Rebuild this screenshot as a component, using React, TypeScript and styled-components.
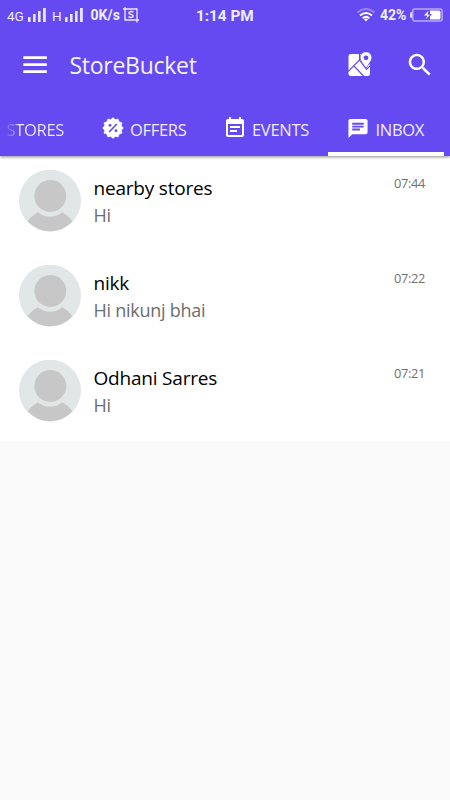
import React from "react";
import styled, { createGlobalStyle } from "styled-components";

const Global = createGlobalStyle`
  * { box-sizing: border-box; }
  body { margin: 0; background: #fafafa; font-family: "Open Sans", "Noto Sans", sans-serif; }
  svg { display: block; flex: none; }
`;

const Screen = styled.div`
  width: 450px;
  height: 800px;
  overflow: hidden;
  background: #fafafa;
`;

const Header = styled.header`
  position: relative;
  height: 156px;
  background: #644af0;
  color: #fff;
  box-shadow: 0 1px 3px rgba(0, 0, 0, 0.45);
`;

const StatusBar = styled.div`
  display: grid;
  grid-template-columns: 196px 1fr auto;
  height: 32px;
  padding-right: 7px;
  font-family: Roboto, sans-serif;
  color: #f0edff;
`;

const StatusGroup = styled.div`
  display: flex;
  align-items: center;
  height: 30px;
`;

const StatusText = styled.span<{ $size: number; $weight?: number; $left?: number; $width?: number; $drop?: number }>`
  font-size: ${(p) => p.$size}px;
  font-weight: ${(p) => p.$weight ?? 400};
  margin-left: ${(p) => p.$left ?? 0}px;
  width: ${(p) => (p.$width ? `${p.$width}px` : "auto")};
  padding-top: ${(p) => p.$drop ?? 0}px;
  line-height: 32px;
  height: 32px;
  white-space: nowrap;
`;

const AppBar = styled.div`
  display: flex;
  align-items: center;
  height: 66px;
  padding: 0 15px 0 19px;
`;

const Title = styled.h1`
  margin: 0 auto 0 18.5px;
  font-size: 23px;
  font-weight: 400;
  line-height: 66px;
  letter-spacing: -0.28px;
  color: #f4f1ff;
`;

const MapButton = styled.div`
  margin-right: 32px;
`;

const Tabs = styled.nav`
  display: grid;
  grid-template-columns: 82px 124px 122px 116px;
  height: 58px;
`;

const Tab = styled.div<{ $active?: boolean; $pad: number }>`
  display: flex;
  align-items: center;
  height: 58px;
  padding: 2px 0 0 ${(p) => p.$pad}px;
  box-shadow: ${(p) => (p.$active ? "inset 0 -4px #fff" : "none")};
`;

const TabLabel = styled.span<{ $left?: number; $fade?: boolean }>`
  margin-left: ${(p) => p.$left ?? 0}px;
  padding-top: 4px;
  font-size: 16.5px;
  letter-spacing: -0.3px;
  line-height: 24px;
  white-space: nowrap;
  color: ${(p) => (p.$fade ? "transparent" : "#efecff")};
  background: ${(p) => (p.$fade ? "linear-gradient(90deg, #7c66f3 0, #a99bf8 8px, #efecff 12px)" : "none")};
  background-clip: ${(p) => (p.$fade ? "text" : "border-box")};
`;

const List = styled.main`
  background: #fff;
`;

const Row = styled.article`
  display: flex;
  height: 95px;
  padding: 13.5px 25px 0 19px;
`;

const Message = styled.div`
  flex: 1;
  margin-left: 12.5px;
`;

const Name = styled.div`
  height: 27px;
  padding-top: 4.5px;
  font-size: 19px;
  letter-spacing: -0.2px;
  line-height: 28px;
  color: #000;
`;

const Preview = styled.div`
  padding-top: 4.5px;
  font-size: 18px;
  letter-spacing: -0.26px;
  line-height: 28px;
  color: #6d6d6d;
`;

const Time = styled.time`
  padding-top: 3.5px;
  font-size: 12.8px;
  letter-spacing: -0.35px;
  line-height: 20px;
  color: #707070;
`;

const Signal = () => (
  <svg width="18" height="14" viewBox="0 0 18 14" fill="#e9e5ff">
    <rect x="0" y="9" width="2.6" height="5" />
    <rect x="5" y="6" width="2.6" height="8" />
    <rect x="10" y="3" width="2.6" height="11" />
    <rect x="15" y="0" width="2.8" height="14" />
  </svg>
);

const Screenshot = () => (
  <svg width="16" height="16" viewBox="0 0 16 16" fill="none" stroke="#eeeaff" strokeWidth="1.3">
    <path d="M0 2H14V15.500M2 0V13H16" />
    <path d="M10.300 5.300C9.500 4.300 5.900 4.200 5.900 6c0 1.700 4.300 1.100 4.300 3 0 1.900-3.700 1.700-4.600.500" strokeWidth="1.5" />
  </svg>
);

const Wifi = () => (
  <svg width="20" height="14" viewBox="0 0 20 14" fill="none" strokeWidth="2">
    <path d="M1.500 4.500Q10-2.500 18.500 4.500" stroke="#9583f5" />
    <path d="M4 7.500Q10 2.500 16 7.500M6.700 10.300Q10 7.500 13.300 10.300" stroke="#fff" />
    <path d="M8 11.300Q10 9.800 12 11.300L10 13.500Z" fill="#fff" />
  </svg>
);

const Battery = () => (
  <svg width="33" height="14" viewBox="0 0 33 14">
    <path d="M1.500 4.300Q.500 4.300.500 5.500V8.500Q.500 9.700 1.500 9.700Z" fill="#fff" stroke="#fff" strokeWidth=".6" />
    <rect x="2.800" y=".900" width="29.300" height="12.200" rx="2" fill="none" stroke="#b6aaf8" strokeWidth="1.500" />
    <path d="M20 2.500H29Q30.500 2.500 30.500 4V10Q30.500 11.500 29 11.500H20Z" fill="#fff" />
    <path d="M18.500 2.500 14 7.500h3.500L15.500 11.500 20 6.800h-2.500Z" fill="#fff" />
    <path d="M20 5.500v3l2-2.500h-2Z" fill="#644af0" />
  </svg>
);

const Menu = () => (
  <svg width="32" height="31" viewBox="0 0 32 31" fill="#fff">
    <path d="M4.300 6.300h23.500v2.700H4.300zM4.300 13.200h23.500v2.700H4.300zM4.300 20.200h23.500v2.700H4.300z" />
  </svg>
);

const MapPin = () => (
  <svg width="25" height="26" viewBox="0 0 25 26">
    <path d="M3 2H14L22 13V21.500Q22 24 19.500 24H3Q.500 24 .500 21.500V4.500Q.500 2 3 2Z" fill="#fff" />
    <path d="M0 19.500 11.500 8M5.500 13.500 16 24.500M11.500 1V8L18.500 17.500L23 13" fill="none" stroke="#644af0" strokeWidth="1.100" />
    <path d="M18 -.300a5.900 5.900 0 0 1 5.900 5.900c0 3.500-3.400 6.500-5.900 10.700-2.500-4.200-5.900-7.200-5.900-10.700a5.900 5.900 0 0 1 5.900-5.900Z" fill="#fff" stroke="#644af0" strokeWidth=".8" />
    <circle cx="18" cy="5.800" r="2.400" fill="#644af0" />
  </svg>
);

const Search = () => (
  <svg width="30" height="30" viewBox="0 0 24 24" fill="#fff">
    <path d="M15.500 14h-.79l-.28-.27C15.410 12.590 16 11.110 16 9.500 16 5.910 13.090 3 9.500 3S3 5.910 3 9.500 5.910 16 9.500 16c1.610 0 3.090-.59 4.230-1.570l.27.28v.79l5 4.990L20.490 19l-4.990-5zm-6 0C7.010 14 5 11.990 5 9.500S7.010 5 9.500 5 14 7.010 14 9.500 11.990 14 9.500 14z" />
  </svg>
);

const badgePoints = Array.from({ length: 24 }, (_, i) => {
  const radius = i % 2 === 0 ? 10.4 : 8.7;
  const angle = (i * Math.PI) / 12;
  return `${11 + radius * Math.sin(angle)},${11 - radius * Math.cos(angle)}`;
}).join(" ");

const Offer = () => (
  <svg width="22" height="22" viewBox="0 0 22 22">
    <polygon points={badgePoints} fill="#fff" stroke="#fff" strokeWidth=".5" strokeLinejoin="round" />
    <path d="M7.200 15 14.800 7" stroke="#644af0" strokeWidth="1.600" />
    <circle cx="8" cy="8.300" r="1.400" fill="#644af0" />
    <circle cx="14" cy="13.700" r="1.400" fill="#644af0" />
  </svg>
);

const EventNote = () => (
  <svg width="24" height="24" viewBox="0 0 24 24" fill="#fff">
    <path d="M17 10H7v2h10v-2zm2-7h-1V1h-2v2H8V1H6v2H5c-1.110 0-1.990.9-1.990 2L3 19c0 1.100.890 2 2 2h14c1.100 0 2-.9 2-2V5c0-1.100-.9-2-2-2zm0 16H5V8h14v11zm-5-5H7v2h7v-2z" />
  </svg>
);

const Chat = () => (
  <svg width="24" height="23" viewBox="0 0 24 24" fill="#fff">
    <path d="M20 2H4c-1.100 0-1.990.9-1.990 2L2 22l4-4h14c1.100 0 2-.9 2-2V4c0-1.100-.9-2-2-2zM6 9h12v2H6V9zm8 5H6v-2h8v2zm4-6H6V6h12v2z" />
  </svg>
);

const Avatar = () => (
  <svg width="62" height="62" viewBox="0 0 62 62">
    <circle cx="31" cy="30.700" r="31" fill="#e1e6e6" />
    <circle cx="31.300" cy="26" r="15.900" fill="#c7c7c7" />
    <path d="M8.500 51Q12.500 45.700 18.800 42.200Q31 51.200 43.400 42.200Q49.500 45.700 53.500 51Q44.500 61.200 31 61.200T8.500 51Z" fill="#c7c7c7" />
  </svg>
);

const messages = [
  { name: "nearby stores", text: "Hi", time: "07:44" },
  { name: "nikk", text: "Hi nikunj bhai", time: "07:22" },
  { name: "Odhani Sarres", text: "Hi", time: "07:21" },
];

export default function App() {
  return (
    <Screen>
      <Global />
      <Header>
        <StatusBar>
          <StatusGroup>
            <StatusText $size={13.5} $left={7} $width={21} $drop={1}>4G</StatusText>
            <Signal />
            <StatusText $size={13.5} $left={6} $width={13} $drop={1}>H</StatusText>
            <Signal />
            <StatusText $size={14} $weight={700} $left={7.5} $width={32.5}>0K/s</StatusText>
            <Screenshot />
          </StatusGroup>
          <StatusText $size={15.3} $weight={700}>1:14 PM</StatusText>
          <StatusGroup>
            <Wifi />
            <StatusText $size={14} $weight={700} $left={4} $width={30}>42%</StatusText>
            <Battery />
          </StatusGroup>
        </StatusBar>
        <AppBar>
          <Menu />
          <Title>StoreBucket</Title>
          <MapButton><MapPin /></MapButton>
          <Search />
        </AppBar>
        <Tabs>
          <Tab $pad={6.5}><TabLabel $fade>STORES</TabLabel></Tab>
          <Tab $pad={19.5}><Offer /><TabLabel $left={6.5}>OFFERS</TabLabel></Tab>
          <Tab $pad={17}><EventNote /><TabLabel $left={5}>EVENTS</TabLabel></Tab>
          <Tab $pad={18} $active><Chat /><TabLabel $left={5.5}>INBOX</TabLabel></Tab>
        </Tabs>
      </Header>
      <List>
        {messages.map((m) => (
          <Row key={m.name}>
            <Avatar />
            <Message>
              <Name>{m.name}</Name>
              <Preview>{m.text}</Preview>
            </Message>
            <Time>{m.time}</Time>
          </Row>
        ))}
      </List>
    </Screen>
  );
}
